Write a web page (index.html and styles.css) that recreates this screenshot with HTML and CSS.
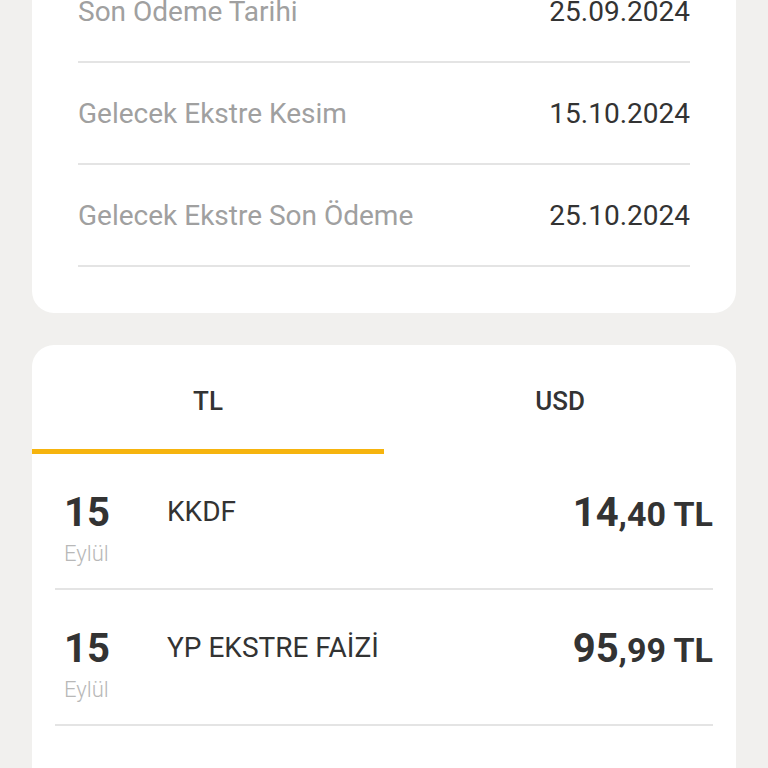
FILE: index.html
```html
<!DOCTYPE html>
<html lang="tr">
<head>
<meta charset="utf-8">
<title>Ekstre</title>
<link rel="stylesheet" href="styles.css">
</head>
<body>
<div class="page">
  <section class="card card-dates">
    <div class="info-row"><span class="label">Son Odeme Tarihi</span><span class="value">25.09.2024</span></div>
    <div class="info-row"><span class="label">Gelecek Ekstre Kesim</span><span class="value">15.10.2024</span></div>
    <div class="info-row"><span class="label">Gelecek Ekstre Son Ödeme</span><span class="value">25.10.2024</span></div>
  </section>

  <section class="card card-tx">
    <div class="tabs">
      <button class="tab active">TL</button>
      <button class="tab">USD</button>
    </div>
    <ul class="tx-list">
      <li class="tx">
        <div class="tx-date"><span class="day">15</span><span class="month">Eylül</span></div>
        <div class="tx-desc">KKDF</div>
        <div class="tx-amount"><span class="int">14</span><span class="dec">,40 TL</span></div>
      </li>
      <li class="tx">
        <div class="tx-date"><span class="day">15</span><span class="month">Eylül</span></div>
        <div class="tx-desc">YP EKSTRE FAİZİ</div>
        <div class="tx-amount"><span class="int">95</span><span class="dec">,99 TL</span></div>
      </li>
      <li class="tx">
        <div class="tx-date"><span class="day">15</span><span class="month">Eylül</span></div>
        <div class="tx-desc">BSMV</div>
        <div class="tx-amount"><span class="int">19</span><span class="dec">,19 TL</span></div>
      </li>
    </ul>
  </section>
</div>
</body>
</html>
```
FILE: styles.css
```css
html, body {
  margin: 0;
  padding: 0;
}
body {
  background: #f1f0ee;
  font-family: Roboto, "Noto Sans", "Liberation Sans", sans-serif;
  color: #333333;
  overflow: hidden;
}
.page {
  padding: 0 32px;
  display: flex;
  flex-direction: column;
  gap: 32px;
}
.card {
  background: #ffffff;
  border-radius: 22px;
}
.card-dates {
  margin-top: -64px;
  padding: 25px 46px 46px;
}
.info-row {
  display: flex;
  justify-content: space-between;
  padding: 34px 0 32px;
  border-bottom: 2px solid #e4e4e4;
  font-size: 28px;
  line-height: 34px;
}
.info-row .label {
  color: #a0a0a0;
}
.info-row .value {
  color: #333333;
}
.card-tx {
  overflow: hidden;
}
.tabs {
  display: flex;
}
.tab {
  flex: 1;
  background: none;
  border: none;
  border-bottom: 5px solid transparent;
  margin: 0;
  padding: 41px 0 33px;
  font-family: inherit;
  font-size: 26px;
  font-weight: 500;
  line-height: 30px;
  color: #333333;
}
.tab.active {
  border-bottom-color: #f6b40e;
}
.tx-list {
  list-style: none;
  margin: 0;
  padding: 0 23px;
}
.tx {
  display: flex;
  align-items: flex-start;
  padding: 35px 0 20px 9px;
  border-bottom: 2px solid #e4e4e4;
}
.tx-date {
  width: 103px;
  display: flex;
  flex-direction: column;
}
.day {
  font-size: 40px;
  font-weight: 700;
  line-height: 48px;
  color: #333333;
}
.month {
  font-size: 22px;
  font-weight: 300;
  line-height: 28px;
  margin-top: 3px;
  color: #b8b8b8;
}
.tx-desc {
  flex: 1;
  font-size: 28px;
  line-height: 34px;
  margin-top: 6px;
  color: #333333;
}
.tx-amount {
  font-size: 40px;
  font-weight: 700;
  line-height: 48px;
  white-space: nowrap;
  color: #333333;
}
.tx-amount .dec {
  font-size: 34px;
  line-height: 1;
}
```
